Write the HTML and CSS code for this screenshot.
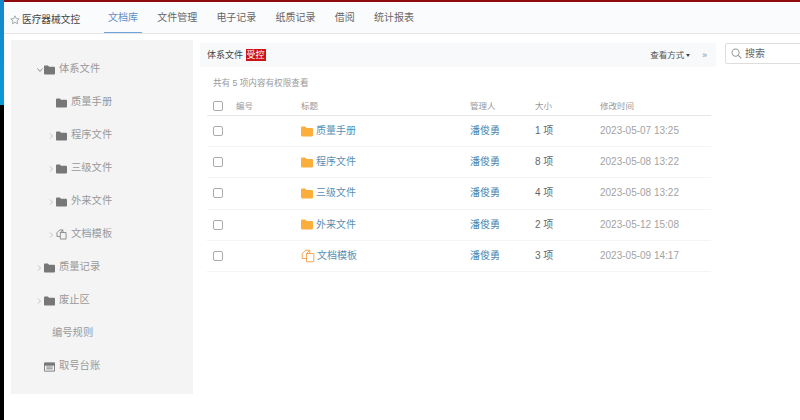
FILE: index.html
```html
<!DOCTYPE html>
<html lang="zh-CN">
<head>
<meta charset="utf-8">
<title>文档库</title>
<link rel="stylesheet" href="styles.css">
</head>
<body>
<svg class="defs" width="0" height="0" aria-hidden="true">
  <symbol id="folder" viewBox="0 0 12 10"><path d="M0 1.200C0 .5.5 0 1.200 0h3l1.300 1.500h5.300c.7 0 1.200.5 1.200 1.200v6.100c0 .7-.5 1.200-1.200 1.200H1.200C.5 10 0 9.500 0 8.800z" fill="currentColor"/></symbol>
  <symbol id="docs" viewBox="0 0 14 14"><path d="M5 9.500H1.200V4.700L4.700 1.200H8.800V4.500M5.500 4.500H12.800V12.800H5.500zM5.500 4.500 8.800 1.200" fill="none" stroke="currentColor" stroke-width="1" stroke-linejoin="round"/></symbol>
</svg>
<div class="strip"></div>
<div class="app">
  <header class="topbar">
    <div class="brand">
      <svg class="star" viewBox="0 0 12 12"><path d="M6 1l1.500 3.300 3.500.4-2.600 2.400.7 3.500L6 8.800l-3.100 1.800.7-3.500L1 4.700l3.500-.4z" fill="none" stroke="#8a8f96" stroke-width=".9" stroke-linejoin="round"/></svg>
      <span>医疗器械文控</span>
    </div>
    <nav class="nav">
      <a class="tab active">文档库</a>
      <a class="tab">文件管理</a>
      <a class="tab">电子记录</a>
      <a class="tab">纸质记录</a>
      <a class="tab">借阅</a>
      <a class="tab">统计报表</a>
    </nav>
  </header>
  <div class="body">
    <aside class="side">
      <div class="node l1"><svg class="chev" viewBox="0 0 6 6"><path d="M.5 1.500 3 4.500 5.500 1.500" fill="none" stroke="#777" stroke-width=".8"/></svg><svg class="fi"><use href="#folder"/></svg><span>体系文件</span></div>
      <div class="node l2"><i class="nochev"></i><svg class="fi"><use href="#folder"/></svg><span>质量手册</span></div>
      <div class="node l2"><svg class="chev" viewBox="0 0 6 6"><path d="M1 .5 3.500 3 1 5.500" fill="none" stroke="#b5b5b5" stroke-width=".8"/></svg><svg class="fi"><use href="#folder"/></svg><span>程序文件</span></div>
      <div class="node l2"><svg class="chev" viewBox="0 0 6 6"><path d="M1 .5 3.500 3 1 5.500" fill="none" stroke="#b5b5b5" stroke-width=".8"/></svg><svg class="fi"><use href="#folder"/></svg><span>三级文件</span></div>
      <div class="node l2"><svg class="chev" viewBox="0 0 6 6"><path d="M1 .5 3.500 3 1 5.500" fill="none" stroke="#b5b5b5" stroke-width=".8"/></svg><svg class="fi"><use href="#folder"/></svg><span>外来文件</span></div>
      <div class="node l2"><svg class="chev" viewBox="0 0 6 6"><path d="M1 .5 3.500 3 1 5.500" fill="none" stroke="#b5b5b5" stroke-width=".8"/></svg><svg class="fi doc"><use href="#docs"/></svg><span>文档模板</span></div>
      <div class="node l1"><svg class="chev" viewBox="0 0 6 6"><path d="M1 .5 3.500 3 1 5.500" fill="none" stroke="#b5b5b5" stroke-width=".8"/></svg><svg class="fi"><use href="#folder"/></svg><span>质量记录</span></div>
      <div class="node l1"><svg class="chev" viewBox="0 0 6 6"><path d="M1 .5 3.500 3 1 5.500" fill="none" stroke="#b5b5b5" stroke-width=".8"/></svg><svg class="fi"><use href="#folder"/></svg><span>废止区</span></div>
      <div class="node plain"><span>编号规则</span></div>
      <div class="node l1"><i class="nochev"></i><svg class="fi" viewBox="0 0 12 10"><path d="M.5.500h11v9H.500z" fill="none" stroke="#777"/><path d="M.5 1h11v2H.500zM2.500 5h7M2.500 7h7" fill="#777" stroke="#777"/></svg><span>取号台账</span></div>
    </aside>
    <main class="main">
      <div class="toolrow">
        <div class="toolbar">
          <div class="crumb">体系文件 <b class="badge">受控</b></div>
          <div class="tools"><span class="view">查看方式<i class="caret"></i></span><span class="more">»</span></div>
        </div>
        <div class="search">
          <svg class="glass" viewBox="0 0 12 12"><circle cx="5" cy="5" r="3.900" fill="none" stroke="#999" stroke-width="1.100"/><path d="M8 8l3.300 3.300" stroke="#999" stroke-width="1.300"/></svg>
          <span>搜索</span>
        </div>
      </div>
      <p class="count">共有 5 项内容有权限查看</p>
      <div class="table">
        <div class="row head"><i class="check"></i><span>编号</span><span>标题</span><span>管理人</span><span>大小</span><span>修改时间</span></div>
        <div class="row"><i class="check"></i><span></span><a class="title"><svg class="ti"><use href="#folder"/></svg>质量手册</a><a class="owner">潘俊勇</a><span class="size">1 项</span><span class="time">2023-05-07 13:25</span></div>
        <div class="row"><i class="check"></i><span></span><a class="title"><svg class="ti"><use href="#folder"/></svg>程序文件</a><a class="owner">潘俊勇</a><span class="size">8 项</span><span class="time">2023-05-08 13:22</span></div>
        <div class="row"><i class="check"></i><span></span><a class="title"><svg class="ti"><use href="#folder"/></svg>三级文件</a><a class="owner">潘俊勇</a><span class="size">4 项</span><span class="time">2023-05-08 13:22</span></div>
        <div class="row"><i class="check"></i><span></span><a class="title"><svg class="ti"><use href="#folder"/></svg>外来文件</a><a class="owner">潘俊勇</a><span class="size">2 项</span><span class="time">2023-05-12 15:08</span></div>
        <div class="row"><i class="check"></i><span></span><a class="title"><svg class="ti doc"><use href="#docs"/></svg>文档模板</a><a class="owner">潘俊勇</a><span class="size">3 项</span><span class="time">2023-05-09 14:17</span></div>
      </div>
    </main>
  </div>
</div>
</body>
</html>
```

FILE: styles.css
```css
* { box-sizing: border-box; }
html, body { margin: 0; height: 100%; overflow: hidden; }
body {
  display: flex;
  background: #fff;
  color: #333;
  font: 10px/1.2 "Liberation Sans", "Noto Sans CJK SC", sans-serif;
}
.defs { position: absolute; }
.strip {
  width: 4px;
  flex: none;
  background: #000;
}
.strip::before {
  content: "";
  display: block;
  height: 105px;
  background: linear-gradient(#1487c9, #0a9ad6);
}
.app { flex: 1; min-width: 0; display: flex; flex-direction: column; }
.topbar {
  height: 34px;
  flex: none;
  display: flex;
  background: #fafbfc;
  border-top: 2px solid #8f0a0a;
  border-bottom: 1px solid #e6e6e6;
}
.brand {
  width: 100px;
  flex: none;
  display: flex;
  align-items: center;
  gap: 2px;
  padding: 4px 0 0 6px;
  font-size: 9.700px;
  color: #444;
}
.star { width: 10px; height: 10px; flex: none; }
.nav { display: flex; gap: 19.200px; }
.tab {
  height: 31px;
  padding: 10px 0 0;
  color: #666;
}
.tab.active {
  color: #5b90c8;
  padding-left: 4px;
  padding-right: 4px;
  margin-right: -4px;
  border-bottom: 1px solid #6ea3dc;
}
.body { flex: 1; display: flex; min-height: 0; align-items: flex-start; }
.side {
  width: 182px;
  height: 354px;
  margin: 6px 0 0 7px;
  padding-top: 13px;
  flex: none;
  background: #f4f4f4;
  color: #999;
  font-size: 10.300px;
}
.node { height: 33px; display: flex; align-items: center; }
.node.l1 { padding-left: 26px; }
.node.l2 { padding-left: 38px; }
.node.plain { padding-left: 41px; }
.chev { width: 6px; height: 6px; flex: none; margin-right: 1px; }
.nochev { width: 7px; flex: none; }
.fi { width: 11px; height: 10px; flex: none; margin-right: 4px; color: #777; }
.fi.doc { height: 11px; }
.main { flex: 1; min-width: 0; padding: 9px 0 0 7px; margin-left: 7px; }
.toolrow { display: flex; align-items: flex-start; }
.toolbar {
  width: 516px;
  height: 24px;
  flex: none;
  margin-left: -7px;
  padding: 0 9px 0 7px;
  background: #f8f9fa;
  display: flex;
  align-items: center;
  justify-content: space-between;
}
.crumb { color: #444; font-size: 9px; }
.badge { background: #cc1212; color: #fff; font-weight: 400; padding: 1px 1px; }
.tools { display: flex; align-items: center; gap: 12px; color: #555; font-size: 8.500px; }
.view { display: flex; align-items: center; gap: 1px; }
.caret { border: 2px solid transparent; border-top: 3px solid #444; border-bottom: 0; margin-left: 1px; }
.more { color: #888; }
.search {
  width: 90px;
  height: 21px;
  flex: none;
  margin-left: 9px;
  border: 1px solid #ddd;
  border-radius: 2px;
  display: flex;
  align-items: center;
  gap: 3px;
  padding-left: 5px;
  color: #666;
}
.glass { width: 11px; height: 11px; flex: none; }
.count { margin: 11px 0 0 6px; color: #999; font-size: 8.600px; height: 10px; line-height: 10px; }
.table { width: 504px; margin-top: 9px; }
.row {
  display: grid;
  grid-template-columns: 23px 65px 169px 65px 65px 111px;
  padding-left: 6px;
  height: 31.200px;
  align-items: center;
  border-bottom: 1px solid #f4f4f4;
  color: #999;
}
.row.head {
  height: 19px;
  border-bottom-color: #e6e6e6;
  font-size: 8.500px;
}
.check {
  width: 10px;
  height: 10px;
  border: 1px solid #aaa;
  border-radius: 2px;
  background: #fff;
}
.title { color: #5a8fb3; display: flex; align-items: center; gap: 3px; }
.ti { width: 12px; height: 11px; flex: none; color: #fbae3c; }
.ti.doc { width: 14px; height: 14px; color: #f2a857; margin-right: -1px; }
.owner { color: #4d86ae; }
.size { color: #666; }
.time { color: #a3a3a3; font-size: 10px; font-weight: 400; white-space: nowrap; }
```
